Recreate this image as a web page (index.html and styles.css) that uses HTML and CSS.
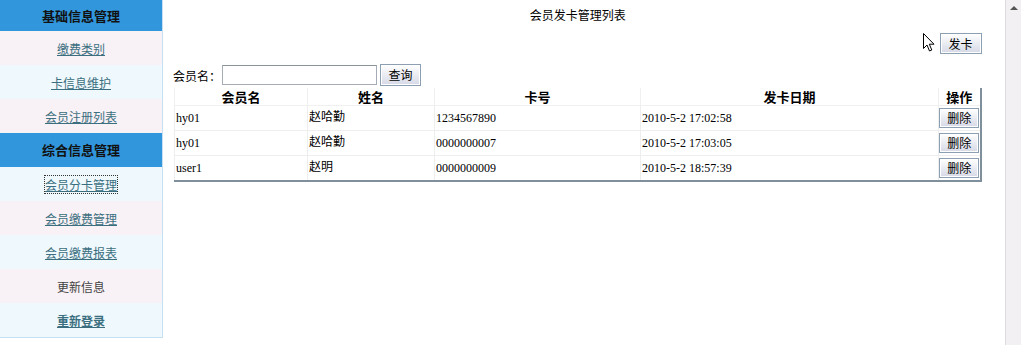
FILE: index.html
```html
<!DOCTYPE html>
<html lang="zh">
<head>
<meta charset="utf-8">
<title>会员发卡管理列表</title>
<link rel="stylesheet" href="styles.css">
</head>
<body>
<div class="page">
  <nav class="sidebar">
    <div class="nav-head">基础信息管理</div>
    <div class="nav-item pink"><a href="#">缴费类别</a></div>
    <div class="nav-item blue"><a href="#">卡信息维护</a></div>
    <div class="nav-item pink"><a href="#">会员注册列表</a></div>
    <div class="nav-head">综合信息管理</div>
    <div class="nav-item blue"><a href="#" class="focused">会员分卡管理</a></div>
    <div class="nav-item pink"><a href="#">会员缴费管理</a></div>
    <div class="nav-item blue"><a href="#">会员缴费报表</a></div>
    <div class="nav-item pink"><span class="plain">更新信息</span></div>
    <div class="nav-item blue"><a href="#" class="strong">重新登录</a></div>
  </nav>
  <main class="main">
    <div class="title">会员发卡管理列表</div>
    <div class="actions">
      <svg class="cursor" width="12" height="19" viewBox="0 0 12 19"><path d="M0.5 0.5 L0.5 15.5 L4 12 L6.5 18 L8.8 17 L6.3 11.2 L11 11.2 Z" fill="#fff" stroke="#000" stroke-width="1"/></svg>
      <button class="btn btn-issue">发卡</button>
    </div>
    <div class="search">
      <label class="search-label">会员名：</label>
      <input class="search-input" type="text">
      <button class="btn btn-query">查询</button>
    </div>
    <table class="grid">
      <colgroup>
        <col class="c1"><col class="c2"><col class="c3"><col class="c4"><col class="c5">
      </colgroup>
      <thead>
        <tr><th>会员名</th><th>姓名</th><th>卡号</th><th>发卡日期</th><th>操作</th></tr>
      </thead>
      <tbody>
        <tr><td>hy01</td><td class="cn">赵哈勤</td><td>1234567890</td><td>2010-5-2 17:02:58</td><td class="op"><button class="btn btn-del">删除</button></td></tr>
        <tr><td>hy01</td><td class="cn">赵哈勤</td><td>0000000007</td><td>2010-5-2 17:03:05</td><td class="op"><button class="btn btn-del">删除</button></td></tr>
        <tr><td>user1</td><td class="cn">赵明</td><td>0000000009</td><td>2010-5-2 18:57:39</td><td class="op"><button class="btn btn-del">删除</button></td></tr>
      </tbody>
    </table>
  </main>
  <div class="scrollbar"><span class="arrow"></span></div>
</div>
</body>
</html>
```
FILE: styles.css
```css
html, body {
  margin: 0;
  padding: 0;
  background: #fff;
}
body {
  font-family: "Liberation Serif", "Noto Sans CJK SC", serif;
  font-size: 12px;
  color: #000;
}
.page {
  display: flex;
  height: 345px;
  overflow: hidden;
}
.sidebar {
  width: 162px;
  flex: none;
  height: 337px;
  border-right: 1px solid #c6e0f3;
  border-bottom: 1px solid #c6e0f3;
  display: flex;
  flex-direction: column;
  font-family: "Noto Sans CJK SC", sans-serif;
}
.nav-head {
  height: 34px;
  line-height: 34px;
  background: #3196dc;
  text-align: center;
  font-weight: bold;
  font-size: 13px;
  color: #111;
}
.nav-head:first-child {
  height: 31px;
  line-height: 31px;
}
.nav-item {
  height: 34px;
  display: flex;
  align-items: center;
  justify-content: center;
  font-size: 12px;
}
.nav-item.pink { background: #f8f1f5; }
.nav-item.blue { background: #eef8fd; }
.nav-item a {
  color: #3b6f80;
  text-decoration: underline;
}
.nav-item a.focused {
  outline: 1px dotted #333;
}
.nav-item a.strong {
  font-weight: bold;
}
.nav-item .plain {
  color: #444;
}
.main {
  flex: 1;
  padding: 0 23px 0 11px;
  display: flex;
  flex-direction: column;
}
.title {
  height: 30px;
  line-height: 30px;
  text-align: center;
  font-family: "Noto Sans CJK SC", sans-serif;
  font-size: 12px;
}
.actions {
  margin-top: 3px;
  height: 21px;
  display: flex;
  justify-content: flex-end;
  align-items: center;
  gap: 5px;
}
.cursor {
  margin-top: -2px;
}
.btn {
  font-family: "Noto Sans CJK SC", sans-serif;
  font-size: 12px;
  line-height: 14px;
  height: 21px;
  padding: 0 6px;
  margin: 0;
  border: 1px solid #8d9fb3;
  background: linear-gradient(#ffffff, #e6e8f0 60%, #d6d9e6);
  color: #000;
  box-shadow: inset 0 0 0 1px #fff;
}
.btn-issue {
  width: 42px;
  padding: 0;
}
.search {
  margin-top: 10px;
  height: 22px;
  display: flex;
  align-items: center;
}
.search-label {
  font-family: "Noto Sans CJK SC", sans-serif;
  font-size: 12px;
  width: 49px;
  margin-left: -1px;
}
.search-input {
  width: 153px;
  height: 18px;
  padding: 0;
  margin: 0;
  border: 1px solid #a5acb5;
  border-top-color: #8c939d;
}
.btn-query {
  margin-left: 3px;
  width: 41px;
  height: 22px;
  padding: 0;
}
.grid {
  margin-top: 2px;
  width: 806px;
  border-collapse: collapse;
  table-layout: fixed;
  border-right: 2px solid #7f909c;
  border-bottom: 2px solid #7f909c;
  border-left: 1px solid #e4e8ea;
}
.c1 { width: 133px; }
.c2 { width: 127px; }
.c3 { width: 206px; }
.c4 { width: 298px; }
.c5 { width: 42px; }
.grid th {
  height: 17px;
  padding: 0;
  font-family: "Noto Sans CJK SC", sans-serif;
  font-size: 13px;
  line-height: 17px;
  font-weight: bold;
  text-align: center;
  border: 1px solid #f0f0f0;
  border-top: none;
}
.grid td {
  height: 23px;
  padding: 0 1px;
  border: 1px solid #eeeeee;
  font-size: 12px;
  vertical-align: middle;
}
.grid td.cn {
  font-family: "Noto Sans CJK SC", sans-serif;
  vertical-align: top;
  padding-top: 1px;
}
.grid td.op {
  padding: 0;
  text-align: center;
}
.btn-del {
  width: 40px;
  height: 20px;
  padding: 0;
}
.scrollbar {
  width: 17px;
  flex: none;
  border-left: 1px solid #dcdcdc;
  background: #f3f0f3;
  display: flex;
  justify-content: center;
}
.arrow {
  margin-top: 6px;
  width: 0;
  height: 0;
  border-left: 4px solid transparent;
  border-right: 4px solid transparent;
  border-bottom: 4px solid #555;
}
```
